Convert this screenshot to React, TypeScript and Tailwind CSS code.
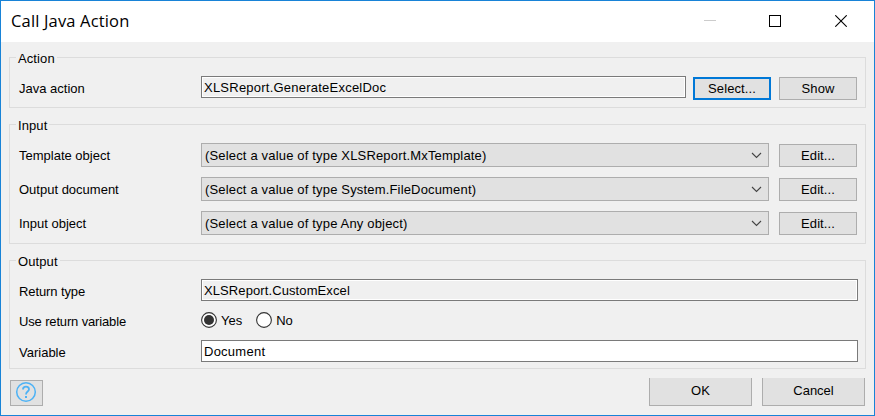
import type { ReactNode } from "react";

function Group({ title, className, children }: { title: string; className: string; children: ReactNode }) {
  return (
    <fieldset className={`mx-2 min-w-0 border border-[#dcdcdc] ${className}`}>
      <legend className="ml-[6px] h-[17px] pt-[2px] pl-[2px] pr-[2px] leading-[15px] tracking-[0.1px]">{title}</legend>
      {children}
    </fieldset>
  );
}

function Label({ children, className }: { children: ReactNode; className: string }) {
  return <span className={`ml-[9px] w-[182px] shrink-0 leading-[15px] ${className}`}>{children}</span>;
}

function Field({ value, className }: { value: string; className: string }) {
  return (
    <div className={`h-[22px] shrink-0 border border-[#7a7a7a] ${className}`}>
      <div className="h-full border border-white pt-[2px] pl-px leading-[15px]">{value}</div>
    </div>
  );
}

function Button({ children, focused = false }: { children: ReactNode; focused?: boolean }) {
  return (
    <button
      className={`mt-px flex h-[23px] w-[78px] shrink-0 justify-center bg-[#e1e1e1] leading-[15px] tracking-[0.1px] ${
        focused ? "border-2 border-[#0078d7] pt-[2px]" : "border border-[#adadad] pt-[3px]"
      }`}
    >
      {children}
    </button>
  );
}

function Combo({ label, value }: { label: string; value: string }) {
  return (
    <div className="flex h-[24px] items-start">
      <Label className="mt-[5px]">{label}</Label>
      <div className="mr-[10px] flex h-[24px] w-[568px] shrink-0 justify-between border border-[#adadad] bg-[#e1e1e1] pl-[3px]">
        <span className="pt-[4px] leading-[15px] tracking-[0.17px]">{value}</span>
        <svg className="mt-[8px] mr-[6px]" width="11" height="7" viewBox="0 0 11 7" fill="none" stroke="#444" strokeWidth="1.1">
          <path d="M1 1l4.5 4.5L10 1" />
        </svg>
      </div>
      <Button>Edit...</Button>
    </div>
  );
}

function Radio({ label, checked = false }: { label: string; checked?: boolean }) {
  return (
    <div className="flex items-start">
      <svg width="16" height="16" viewBox="0 0 16 16">
        <circle cx="8" cy="8" r="7.4" fill="#fff" stroke="#333" strokeWidth="1.1" />
        {checked && <circle cx="8" cy="8" r="5" fill="#333" />}
      </svg>
      <span className="mt-px ml-[4px] leading-[15px]">{label}</span>
    </div>
  );
}

export default function App() {
  return (
    <div className="flex h-[416px] w-[875px] flex-col overflow-hidden border border-[#1883d7] bg-[#f0f0f0] font-['Liberation_Sans',Arial,sans-serif] text-[13px] text-black">
      <header className="flex h-[41px] shrink-0 justify-between bg-white">
        <h1 className="pt-[8px] pl-[10px] font-['Open_Sans',sans-serif] text-[16.5px] leading-[24px] tracking-[0.16px]">Call Java Action</h1>
        <div className="flex pt-[14px] pr-[27px]">
          <svg className="mr-[53px]" width="12" height="12" viewBox="0 0 12 12" shapeRendering="crispEdges">
            <path d="M0 5.5h12" stroke="#ccc" />
          </svg>
          <svg className="mr-[54px]" width="12" height="12" viewBox="0 0 12 12" fill="none" shapeRendering="crispEdges">
            <rect x=".5" y=".5" width="11" height="11" stroke="#000" />
          </svg>
          <svg width="12" height="12" viewBox="0 0 12 12" fill="none">
            <path d="M.3.3l11.4 11.4M11.7.3L.3 11.7" stroke="#000" strokeWidth="1.1" />
          </svg>
        </div>
      </header>

      <Group title="Action" className="mt-[7px] h-[59px]">
        <div className="flex items-start pt-[10px]">
          <Label className="mt-[5px]">Java action</Label>
          <Field className="mr-[7px] w-[485px] tracking-[0.23px]" value="XLSReport.GenerateExcelDoc" />
          <div className="flex gap-2">
            <Button focused>Select...</Button>
            <Button>Show</Button>
          </div>
        </div>
      </Group>

      <Group title="Input" className="mt-2 h-[128px]">
        <div className="flex flex-col gap-[10px] pt-[10px]">
          <Combo label="Template object" value="(Select a value of type XLSReport.MxTemplate)" />
          <Combo label="Output document" value="(Select a value of type System.FileDocument)" />
          <Combo label="Input object" value="(Select a value of type Any object)" />
        </div>
      </Group>

      <Group title="Output" className="mt-2 h-[117px]">
        <div className="flex items-start pt-[10px]">
          <Label className="mt-[5px] tracking-[-0.1px]">Return type</Label>
          <Field className="w-[657px] tracking-[0.1px]" value="XLSReport.CustomExcel" />
        </div>
        <div className="mt-[11px] flex h-[16px] items-start">
          <Label className="mt-[2px] tracking-[-0.15px]">Use return variable</Label>
          <div className="flex gap-[14px]">
            <Radio label="Yes" checked />
            <Radio label="No" />
          </div>
        </div>
        <div className="mt-[12px] flex items-start">
          <Label className="mt-[5px]">Variable</Label>
          <Field className="w-[657px] bg-white tracking-[0.25px]" value="Document" />
        </div>
      </Group>

      <footer className="mt-[9px] flex items-start pl-[9px]">
        <button className="mt-[2px] flex h-[26px] w-[33px] justify-center border border-[#adadad] bg-[#e1e1e1]">
          <svg className="-ml-px" width="22" height="22" viewBox="0 0 22 22" fill="none" stroke="#4db2f5">
            <circle cx="11" cy="11" r="9.3" strokeWidth="1.5" />
            <path d="M8 8.4C8 6.6 9.3 5.7 11 5.7s3 1 3 2.6c0 2.200-3 2.300-3 5.100" strokeWidth="1.8" />
            <path d="M11 15v2" strokeWidth="2" />
          </svg>
        </button>
        <div className="ml-[606px] flex gap-[10px]">
          <button className="h-[28px] w-[103px] border border-t-0 border-[#adadad] bg-[#e1e1e1] pb-[3px] leading-[15px]">OK</button>
          <button className="h-[28px] w-[103px] border border-t-0 border-[#adadad] bg-[#e1e1e1] pb-[3px] leading-[15px]">Cancel</button>
        </div>
      </footer>
    </div>
  );
}
